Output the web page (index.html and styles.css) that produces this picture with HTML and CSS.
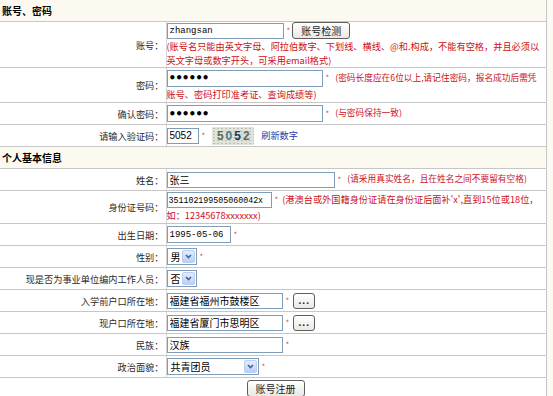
FILE: index.html
```html
<!DOCTYPE html>
<html lang="zh-CN">
<head>
    <meta charset="UTF-8">
    <title>考生注册</title>
    <link rel="stylesheet" href="styles.css">
</head>
<body>

<table class="form">
    <colgroup><col class="col-label"><col></colgroup>
    <tr class="section"><td colspan="2">账号、密码</td></tr>
    <tr class="row-user">
        <th>账号：</th>
        <td>
            <input type="text" class="txt w-user" value="zhangsan"><span class="req">*</span><button class="btn btn-check">账号检测</button>
            <div class="note">(账号名只能由英文字母、阿拉伯数字、下划线、横线、@和.构成，不能有空格，并且必须以<br>英文字母或数字开头，可采用email格式)</div>
        </td>
    </tr>
    <tr class="row-pwd">
        <th>密码：</th>
        <td><input type="password" class="txt pwd w-pwd" value="123456"><span class="req">*</span><span class="note note-side">(密码长度应在6位以上,请记住密码，报名成功后需凭</span><br><span class="note">账号、密码打印准考证、查询成绩等)</span></td>
    </tr>
    <tr>
        <th>确认密码：</th>
        <td><input type="password" class="txt pwd w-pwd" value="123456"><span class="req">*</span><span class="note note-side">(与密码保持一致)</span></td>
    </tr>
    <tr>
        <th>请输入验证码：</th>
        <td>
            <input type="text" class="txt sans w-code" value="5052"><span class="req">*</span><span class="captcha"><span class="d1">5</span><span class="d2">0</span><span class="d3">5</span><span class="d4">2</span></span><a class="refresh" href="#">刷新数字</a>
        </td>
    </tr>
    <tr class="section"><td colspan="2">个人基本信息</td></tr>
    <tr>
        <th>姓名：</th>
        <td><input type="text" class="txt cjk w-name" value="张三"><span class="req">*</span><span class="note note-side">(请采用真实姓名，且在姓名之间不要留有空格)</span></td>
    </tr>
    <tr class="row-id">
        <th>身份证号码：</th>
        <td><input type="text" class="txt w-id" value="351102199505060042x"><span class="req">*</span><span class="note note-id">(港澳台或外国籍身份证请在身份证后面补'x',直到15位或18位，<br>如：12345678xxxxxxx)</span></td>
    </tr>
    <tr>
        <th>出生日期：</th>
        <td><input type="text" class="txt w-date" value="1995-05-06"><span class="req">*</span></td>
    </tr>
    <tr>
        <th>性别：</th>
        <td>
            <span class="sel w-sex"><span class="sel-val">男</span><span class="sel-btn"><svg width="7" height="5" viewBox="0 0 7 5"><path d="M1 1l2.5 2.5L6 1" fill="none" stroke="#4a5f8c" stroke-width="1.6"/></svg></span></span><span class="req">*</span>
        </td>
    </tr>
    <tr>
        <th>现是否为事业单位编内工作人员：</th>
        <td>
            <span class="sel w-sex"><span class="sel-val">否</span><span class="sel-btn"><svg width="7" height="5" viewBox="0 0 7 5"><path d="M1 1l2.5 2.5L6 1" fill="none" stroke="#4a5f8c" stroke-width="1.6"/></svg></span></span>
        </td>
    </tr>
    <tr>
        <th>入学前户口所在地：</th>
        <td><input type="text" class="txt cjk w-addr" value="福建省福州市鼓楼区"><span class="req">*</span><button class="btn btn-more">...</button></td>
    </tr>
    <tr>
        <th>现户口所在地：</th>
        <td><input type="text" class="txt cjk w-addr" value="福建省厦门市思明区"><span class="req">*</span><button class="btn btn-more">...</button></td>
    </tr>
    <tr>
        <th>民族：</th>
        <td><input type="text" class="txt cjk w-addr" value="汉族"><span class="req">*</span></td>
    </tr>
    <tr>
        <th>政治面貌：</th>
        <td>
            <span class="sel w-party"><span class="sel-val">共青团员</span><span class="sel-btn"><svg width="7" height="5" viewBox="0 0 7 5"><path d="M1 1l2.5 2.5L6 1" fill="none" stroke="#4a5f8c" stroke-width="1.6"/></svg></span></span><span class="req">*</span>
        </td>
    </tr>
    <tr class="row-submit">
        <td colspan="2"><button class="btn btn-submit">账号注册</button></td>
    </tr>
</table>

</body>
</html>
```

FILE: styles.css
```css
html, body {
    margin: 0;
    padding: 0;
    background-color: #fbf9f1;
}
body {
    font-family: "Noto Sans CJK SC", "Noto Sans", sans-serif;
    font-size: 9.2px;
    color: #2a2a2a;
}
.form {
    width: 547px;
    border-collapse: collapse;
    table-layout: fixed;
    background-color: #fff;
    border-right: 1px solid #c6c6c6;
}
.col-label {
    width: 166px;
}
.form th, .form td {
    height: 21px;
    padding: 0;
    line-height: 14px;
    vertical-align: middle;
    border-bottom: 1px solid #c6c6c6;
    white-space: nowrap;
}
.form th {
    font-weight: normal;
    text-align: right;
    padding-right: 2px;
    border-right: 1px solid #d6d6d6;
}
.section td {
    background-color: #fcfaf0;
    color: #000;
    font-weight: bold;
    font-size: 10px;
    padding-left: 2px;
}
.row-user td {
    height: 45px;
}
.row-pwd td {
    height: 34px;
}
.row-id td {
    height: 32px;
}
.row-submit td {
    text-align: center;
    padding-left: 5px;
}

/* inputs */
.txt {
    box-sizing: border-box;
    height: 16px;
    margin: 0;
    padding: 0 2px;
    border: 1px solid #7f9db9;
    background-color: #fff;
    color: #000;
    font-family: "Liberation Mono", monospace;
    font-size: 9px;
    vertical-align: middle;
}
.txt.cjk {
    font-family: "Noto Sans CJK SC", sans-serif;
    font-size: 10px;
}
.txt.sans {
    font-family: "Liberation Sans", Arial, sans-serif;
    font-size: 10px;
}
.txt.pwd {
    padding-left: 1px;
    font-family: "DejaVu Sans", sans-serif;
    font-size: 12px;
    font-weight: bold;
    letter-spacing: -1px;
}
.w-user { width: 117px; }
.w-pwd { width: 156px; height: 17px; }
.w-code { width: 32px; }
.w-name { width: 168px; }
.w-id { width: 105px; font-size: 8.3px; padding: 0 1px; }
.w-date { width: 64px; height: 17px; }
.w-addr { width: 116px; }

.req {
    color: #e0474c;
    font-size: 8px;
    margin: 0 2px 0 3px;
    vertical-align: middle;
}
.note {
    color: #cc1020;
}
.note-side {
    margin-left: 4px;
    font-size: 8.7px;
}
.note-id {
    margin-left: 2px;
}

/* select boxes */
.sel {
    display: inline-flex;
    align-items: center;
    box-sizing: border-box;
    height: 17px;
    border: 1px solid #7f9db9;
    background-color: #fff;
    vertical-align: middle;
}
.sel-val {
    flex: 1;
    padding-left: 3px;
    color: #000;
    font-size: 10px;
}
.sel-btn {
    box-sizing: border-box;
    display: flex;
    align-items: center;
    justify-content: center;
    width: 13px;
    height: 13px;
    margin-right: 1px;
    border: 1px solid #bccdf2;
    border-radius: 2px;
    background: linear-gradient(#e3ecfe, #b9cffa);
}
.w-sex { width: 30px; }
.w-party { width: 92px; }

/* buttons */
.btn {
    box-sizing: border-box;
    height: 17px;
    margin: 0;
    padding: 0;
    border: 1px solid #5e5e5e;
    border-radius: 3px;
    background: linear-gradient(#ffffff, #e9e8e2);
    color: #222;
    font-family: "Noto Sans CJK SC", sans-serif;
    font-size: 10px;
    line-height: 14px;
    vertical-align: middle;
}
.btn-check { width: 58px; }
.btn-more {
    width: 22px;
    height: 16px;
    margin-left: 2px;
    font-family: "Liberation Sans", sans-serif;
    font-weight: bold;
    letter-spacing: 1px;
}
.btn-submit { width: 58px; }

/* captcha */
.captcha {
    display: inline-block;
    width: 42px;
    height: 18px;
    margin: 0 7px 0 5px;
    background-color: #dfe3d9;
    background-image: radial-gradient(#bcc2b5 1px, transparent 1px);
    background-size: 4px 3px;
    font: bold 12px/18px "Liberation Sans", Arial, sans-serif;
    letter-spacing: 2px;
    text-indent: 2px;
    text-align: center;
    vertical-align: middle;
}
.d1 { color: #5b6c4e; }
.d2 { color: #3f7f8e; }
.d3 { color: #27346a; }
.d4 { color: #66665e; }
.refresh {
    color: #1f3aa6;
    text-decoration: none;
}
```
